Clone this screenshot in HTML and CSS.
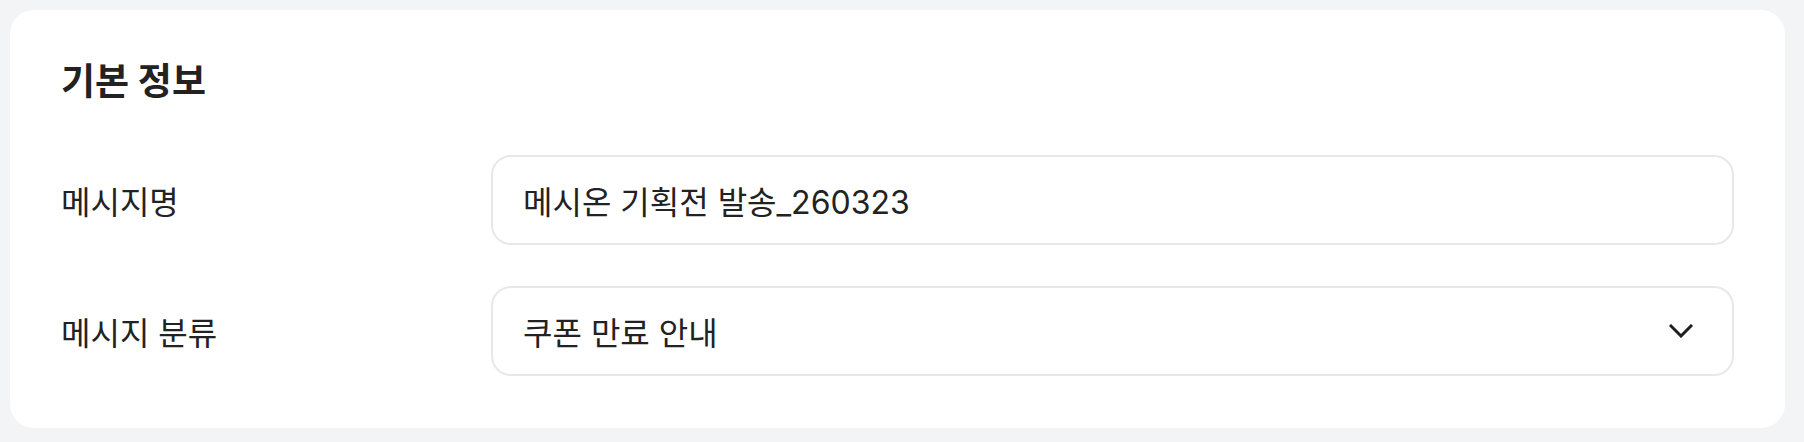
FILE: index.html
```html
<!DOCTYPE html>
<html lang="ko">
<head>
    <meta charset="UTF-8">
    <meta name="viewport" content="width=device-width, initial-scale=1.0">
    <title>기본 정보</title>
    <link rel="stylesheet" href="styles.css">
</head>
<body>
    <div class="card">
        <h2 class="card-title">기본 정보</h2>

        <div class="form-row">
            <label class="form-label" for="msgName">메시지명</label>
            <div class="field">
                <span class="field-value" id="msgName">메시온 기획전 발송_260323</span>
            </div>
        </div>

        <div class="form-row">
            <label class="form-label" for="msgType">메시지 분류</label>
            <div class="field field-select">
                <span class="field-value" id="msgType">쿠폰 만료 안내</span>
                <svg class="chevron" width="24" height="14" viewBox="0 0 24 14" fill="none">
                    <path d="M2 2 L12 12 L22 2" stroke="#1f1f1f" stroke-width="3" stroke-linecap="square"/>
                </svg>
            </div>
        </div>
    </div>
</body>
</html>
```

FILE: styles.css
```css
* {
    box-sizing: border-box;
}
body {
    margin: 0;
    padding: 10px 19px 14px 10px;
    background-color: #f3f4f6;
    font-family: Inter, "Noto Sans CJK KR", sans-serif;
    color: #222;
}
.card {
    background: #fff;
    border-radius: 24px;
    padding: 49px 51px 52px 51px;
}
.card-title {
    margin: 0 0 50px;
    font-size: 37px;
    line-height: 46px;
    font-weight: 700;
    color: #222;
}
.form-row {
    display: grid;
    grid-template-columns: 430px 1fr;
    align-items: center;
}
.form-row + .form-row {
    margin-top: 41px;
}
.form-label {
    font-size: 32px;
    font-weight: 400;
    color: #222;
}
.field {
    height: 90px;
    border: 2px solid #e8e8e8;
    border-radius: 20px;
    padding: 0 30px;
    display: flex;
    align-items: center;
    justify-content: space-between;
}
.field-value {
    font-size: 32px;
    color: #222;
}
.field-select .chevron {
    margin-right: 9px;
}
```
